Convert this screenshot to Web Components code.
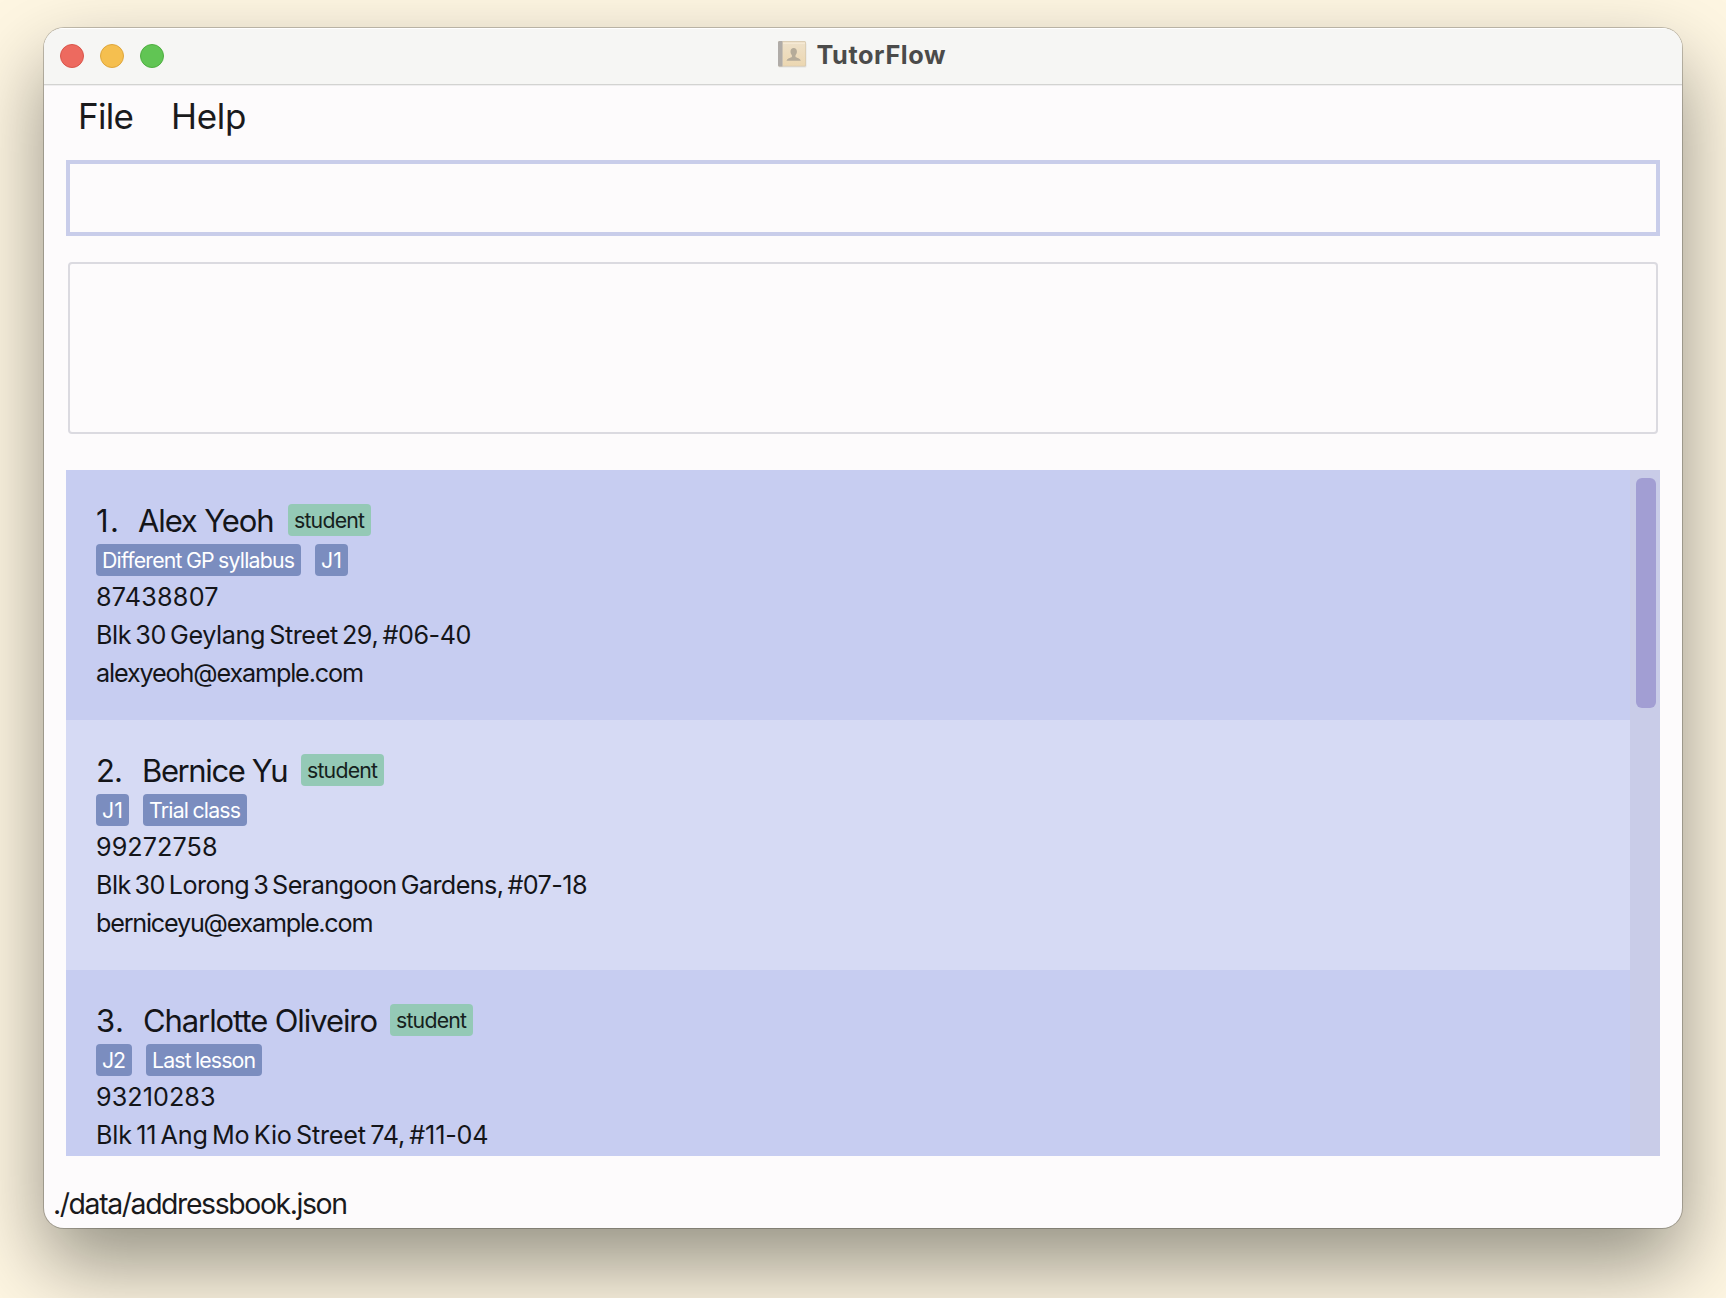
<!DOCTYPE html>
<html lang="en">
<head>
<meta charset="utf-8">
<title>TutorFlow</title>
<style>
  html, body { margin: 0; height: 100%; }
  body { background: #fef6e2; overflow: hidden; font-family: Inter, "Liberation Sans", sans-serif; color: #1a1a1c; }
</style>
</head>
<body>
<tf-window></tf-window>
<script>
class TfBase extends HTMLElement {
  constructor() { super(); this.attachShadow({ mode: 'open' }); }
  connectedCallback() { this.shadowRoot.innerHTML = this.render(); this.ready(); }
  ready() {}
}

/* One line of text tracked so that it fills the given width. */
class TfText extends TfBase {
  render() {
    return `<style>
      :host { display: block; flex: none; white-space: nowrap; width: ${this.getAttribute('w')}px; }
      span { display: inline-block; font-kerning: normal; }
    </style><span>${this.getAttribute('text')}</span>`;
  }
  ready() {
    const s = this.shadowRoot.querySelector('span');
    const n = s.textContent.length;
    const gap = (Number(this.getAttribute('w')) - s.getBoundingClientRect().width) / Math.max(1, n - 1);
    s.style.letterSpacing = gap.toFixed(3) + 'px';
  }
}

class TfTitleBar extends TfBase {
  render() {
    return `<style>
      :host { display: grid; grid-template-columns: 1fr auto 1fr; align-items: center; height: 56px; flex: none;
        background: #f6f6f4; border-bottom: 1px solid #d3d3d1; box-shadow: inset 0 1px #fff, 0 1px #efeeef; }
      .lights { display: flex; gap: 16px; padding-left: 16px; }
      i { width: 24px; height: 24px; border-radius: 50%; box-sizing: border-box; border: 1px solid; }
      .r { background: #ed6a5f; border-color: #d9564b; }
      .y { background: #f5bf4f; border-color: #dea63c; }
      .g { background: #61c554; border-color: #4fae41; }
      .title { display: flex; align-items: center; gap: 10px; font-size: 25.3px; font-weight: 700; line-height: 32px; color: #4b4b4a; margin-left: -2px; padding-right: 2px; }
      svg { display: block; margin-top: -4px; }
      tf-text { margin-top: -3px; }
    </style>
    <div class="lights"><i class="r"></i><i class="y"></i><i class="g"></i></div>
    <div class="title">
      <svg width="30" height="28" viewBox="0 0 30 28">
        <defs><linearGradient id="c" x1="0" y1="0" x2="0" y2="1"><stop offset="0" stop-color="#eee1ca"/><stop offset="1" stop-color="#ecd7b1"/></linearGradient></defs>
        <rect x="1.5" y="2.5" width="28" height="25" rx="1.5" fill="#e2e1df"/>
        <rect x="1" y="1" width="28" height="25.500" rx="1.500" fill="#d6c8ae"/>
        <rect x="5.500" y="1.700" width="22.800" height="24" rx="1" fill="url(#c)"/>
        <path d="M6 3.300h22" stroke="#f7ecd8" stroke-width="1"/>
        <path d="M2.500 1H5v25.500H2.500A1.500 1.500 0 0 1 1 25V2.500A1.500 1.500 0 0 1 2.500 1z" fill="#b0aca8"/>
        <path d="M5.500 1v25.500" stroke="#cbc2b3" stroke-width="1"/>
        <path d="M16.700 8c2 0 3.200 1.400 3.200 3.500 0 1.700-.700 2.900-1.400 3.800v1.600c1 .9 5 1.300 5.300 3.800H9.600c.3-2.500 4.300-2.900 5.300-3.800v-1.600c-.7-.9-1.400-2.100-1.400-3.800C13.500 9.400 14.700 8 16.700 8z" fill="#b5ab99"/>
      </svg>
      <tf-text text="TutorFlow" w="129"></tf-text>
    </div><div></div>`;
  }
}

class TfMenuBar extends TfBase {
  render() {
    return `<style>
      :host { display: flex; gap: 37px; height: 75px; flex: none; padding-left: 34px; box-sizing: border-box; font-size: 35px; line-height: 63px; }
    </style>
    <tf-text text="File" w="56"></tf-text><tf-text text="Help" w="75.500"></tf-text>`;
  }
}

class TfTag extends TfBase {
  render() {
    const role = this.getAttribute('kind') === 'role';
    const w = Number(this.getAttribute('w'));
    return `<style>
      :host { display: flex; justify-content: center; flex: none; width: ${w}px; height: 32px; line-height: 32px;
        border-radius: 4px; font-size: 21.300px; background: ${role ? '#94c9b6' : '#7b8dbf'}; color: ${role ? '#16211d' : '#fff'}; }
    </style><tf-text text="${this.getAttribute('text')}" w="${w - 12}"></tf-text>`;
  }
}

class TfContact extends TfBase {
  render() {
    const c = this.data;
    return `<style>
      :host { display: block; height: 250px; box-sizing: border-box; padding: 34px 30px 0; background: ${c.n % 2 ? '#c7cdf1' : '#d6daf4'}; color: #141519; font-size: 25.200px; line-height: 38px; }
      .head { display: flex; height: 32px; font-size: 31px; line-height: 33px; }
      .no { margin-right: ${c.gap}px; }
      .tags { display: flex; gap: 14px; margin: 8px 0 2px; word-spacing: -1px; }
      .line { word-spacing: -2.500px; }
      .name { display: flex; width: ${c.roleX}px; }
    </style>
    <div class="head"><div class="name"><tf-text class="no" text="${c.n}." w="${c.nw}"></tf-text><tf-text text="${c.name}" w="${c.w}"></tf-text></div>
      <tf-tag kind="role" text="student" w="83"></tf-tag></div>
    <div class="tags">${c.tags.map(t => `<tf-tag text="${t[0]}" w="${t[1]}"></tf-tag>`).join('')}</div>
    ${c.lines.map(l => `<tf-text class="line" text="${l[0]}" w="${l[1]}"></tf-text>`).join('')}`;
  }
}

const CONTACTS = [
  { n: 1, nw: 23, gap: 19, name: 'Alex Yeoh', w: 136.5, roleX: 192,
    tags: [['Different GP syllabus', 205], ['J1', 33]],
    lines: [['87438807', 122.5], ['Blk 30 Geylang Street 29, #06-40', 375.5], ['alexyeoh@example.com', 268]] },
  { n: 2, nw: 27, gap: 19, name: 'Bernice Yu', w: 146.5, roleX: 205,
    tags: [['J1', 33], ['Trial class', 104]],
    lines: [['99272758', 121.5], ['Blk 30 Lorong 3 Serangoon Gardens, #07-18', 491.5], ['berniceyu@example.com', 277.5]] },
  { n: 3, nw: 28, gap: 19, name: 'Charlotte Oliveiro', w: 235, roleX: 294,
    tags: [['J2', 36], ['Last lesson', 116]],
    lines: [['93210283', 119.5], ['Blk 11 Ang Mo Kio Street 74, #11-04', 392.5]] }
];

class TfContactList extends TfBase {
  render() {
    return `<style>
      :host { display: flex; height: 686px; flex: none; margin: 36px 22px 0; overflow: hidden; }
      .rows { flex: 1; overflow: hidden; }
      .bar { width: 30px; box-sizing: border-box; padding: 8px 4px 0 6px; background: #c9cce8; }
      .thumb { height: 230px; border-radius: 6px; background: #a29ed3; }
    </style><div class="rows"></div><div class="bar"><div class="thumb"></div></div>`;
  }
  ready() {
    const rows = this.shadowRoot.querySelector('.rows');
    for (const c of CONTACTS) {
      const el = document.createElement('tf-contact');
      el.data = c;
      rows.append(el);
    }
  }
}

class TfWindow extends TfBase {
  render() {
    return `<style>
      :host { display: block; padding: 28px 44px 70px; height: 1298px; box-sizing: border-box; }
      .win { display: flex; flex-direction: column; height: 1200px; border-radius: 20px; overflow: hidden; background: #fdfbfc;
        box-shadow: 0 0 0 1px rgba(0,0,0,.22), 0 36px 80px rgba(0,4,0,.42); }
      .command { height: 76px; flex: none; box-sizing: border-box; margin: 0 22px; border: 4px solid #c9cdea; }
      .result { height: 172px; flex: none; box-sizing: border-box; margin: 26px 24px 0; border: 2px solid #dbdae0; border-radius: 4px; }
      .status { padding: 28px 0 0 9px; font-size: 28.400px; line-height: 40px; }
    </style>
    <div class="win">
      <tf-title-bar></tf-title-bar>
      <tf-menu-bar></tf-menu-bar>
      <div class="command"></div>
      <div class="result"></div>
      <tf-contact-list></tf-contact-list>
      <div class="status"><tf-text text="./data/addressbook.json" w="295"></tf-text></div>
    </div>`;
  }
}

customElements.define('tf-text', TfText);
customElements.define('tf-tag', TfTag);
customElements.define('tf-title-bar', TfTitleBar);
customElements.define('tf-menu-bar', TfMenuBar);
customElements.define('tf-contact', TfContact);
customElements.define('tf-contact-list', TfContactList);
customElements.define('tf-window', TfWindow);
</script>
</body>
</html>
